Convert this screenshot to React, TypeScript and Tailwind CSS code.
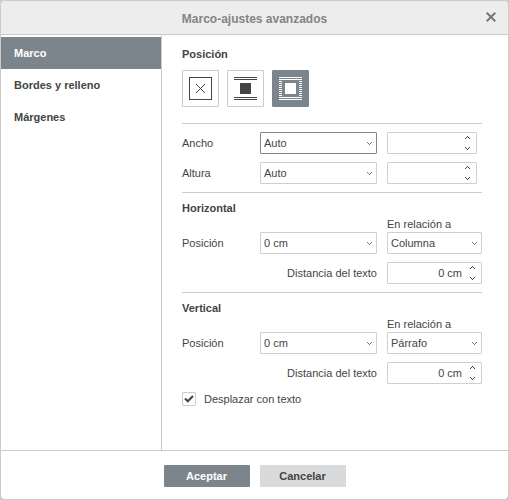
import { useState } from "react";
import type { ReactNode } from "react";

function Chevron({ up = false, className = "" }: { up?: boolean; className?: string }) {
  return (
    <svg
      width="5"
      height="3"
      viewBox="0 0 5 3"
      fill="currentColor"
      shapeRendering="crispEdges"
      aria-hidden="true"
      className={className}
    >
      {up ? (
        <path d="M2 0h1v1h1v1h1v1H4V2H3V1H2v1H1v1H0V2h1V1h1z" />
      ) : (
        <path d="M0 0h1v1h1v1h1V1h1V0h1v1H4v1H3v1H2V2H1V1H0z" />
      )}
    </svg>
  );
}

function Combo({
  id,
  label,
  options,
  active = false,
}: {
  id: string;
  label?: string;
  options: string[];
  active?: boolean;
}) {
  return (
    <div className="relative">
      <select
        id={id}
        aria-label={label}
        className={`block h-[22px] w-full appearance-none rounded-[1px] border bg-white pr-4 pl-[3px] text-[11px] leading-4 outline-none ${
          active ? "border-[#848484]" : "border-[#cfcfcf]"
        }`}
      >
        {options.map((o) => (
          <option key={o}>{o}</option>
        ))}
      </select>
      <Chevron className="pointer-events-none absolute top-[10px] right-[5px] text-[#777]" />
    </div>
  );
}

function Spinner({ id, label, initial = "" }: { id: string; label?: string; initial?: string }) {
  const [value, setValue] = useState(initial);
  const step = (by: number) =>
    setValue((v) => `${Math.max(0, Math.round(((parseFloat(v) || 0) + by) * 10) / 10)} cm`);
  return (
    <div className="flex h-[22px] rounded-[1px] border border-[#cfcfcf] bg-white">
      <input
        id={id}
        aria-label={label}
        type="text"
        value={value}
        onChange={(e) => setValue(e.target.value)}
        className="w-full min-w-0 flex-1 bg-transparent pr-px text-right text-[11px] leading-4 outline-none"
      />
      <div className="flex w-[18px] flex-col">
        <button
          type="button"
          aria-label="Aumentar"
          onClick={() => step(0.1)}
          className="flex flex-1 items-start justify-center pt-[3px]"
        >
          <Chevron up />
        </button>
        <button
          type="button"
          aria-label="Disminuir"
          onClick={() => step(-0.1)}
          className="flex flex-1 items-end justify-center pb-[3px]"
        >
          <Chevron />
        </button>
      </div>
    </div>
  );
}

function InlineIcon() {
  return (
    <svg width="23" height="23" viewBox="0 0 23 23" fill="none" stroke="currentColor" aria-hidden="true">
      <rect x="0.5" y="0.5" width="22" height="22" />
      <path d="M7 7l9 9M16 7l-9 9" shapeRendering="crispEdges" />
    </svg>
  );
}

function TopBottomIcon() {
  return (
    <svg width="23" height="23" viewBox="0 0 23 23" fill="currentColor" shapeRendering="crispEdges" aria-hidden="true">
      <path d="M0 0h23v1H0zM0 2h23v1H0zM0 20h23v1H0zM0 22h23v1H0zM6 6h11v11H6z" />
    </svg>
  );
}

function AroundIcon() {
  return (
    <svg width="23" height="23" viewBox="0 0 23 23" fill="currentColor" shapeRendering="crispEdges" aria-hidden="true">
      <path d="M0 0h23v1H0zM0 2h23v1H0zM0 20h23v1H0zM0 22h23v1H0zM6 6h11v11H6z" />
      {[4, 6, 8, 10, 12, 14, 16, 18].map((y) => (
        <path key={y} d={`M0 ${y}h3v1H0zM20 ${y}h3v1h-3z`} />
      ))}
    </svg>
  );
}

const wraps: { name: string; icon: ReactNode }[] = [
  { name: "En línea", icon: <InlineIcon /> },
  { name: "Superior e inferior", icon: <TopBottomIcon /> },
  { name: "Alrededor", icon: <AroundIcon /> },
];

const tabs = ["Marco", "Bordes y relleno", "Márgenes"];

function PlacementSection({
  id,
  title,
  relative,
  children,
}: {
  id: string;
  title: string;
  relative: string[];
  children?: ReactNode;
}) {
  return (
    <section className="border-t border-[#cbcbcb] pt-[7px] pb-2">
      <h2 className="font-bold">{title}</h2>
      <div className="grid grid-cols-[68px_1fr_95px] items-center gap-x-[10px]">
        <label htmlFor={`${id}-rel`} className="col-start-3">
          En relación a
        </label>
        <label htmlFor={`${id}-pos`}>Posición</label>
        <Combo id={`${id}-pos`} options={["0 cm"]} />
        <Combo id={`${id}-rel`} options={relative} />
      </div>
      <div className="mt-2 grid grid-cols-[1fr_95px] items-center gap-x-[10px]">
        <label htmlFor={`${id}-dist`} className="text-right">
          Distancia del texto
        </label>
        <Spinner id={`${id}-dist`} initial="0 cm" />
      </div>
      {children}
    </section>
  );
}

export default function App() {
  const [tab, setTab] = useState(0);
  const [wrap, setWrap] = useState(2);
  const [move, setMove] = useState(true);

  return (
    <div className="bg-[#cbcbcb] font-['Liberation_Sans',Arial,sans-serif] text-[11px] leading-4 text-[#444]">
      <div
        role="dialog"
        aria-labelledby="title"
        className="flex min-h-screen flex-col overflow-hidden rounded-[5px] border border-[#cbcbcb] bg-white"
      >
        <header className="relative flex h-[34px] items-center justify-center border-b border-[#cbcbcb] bg-[#ededed] pt-[2px]">
          <h1 id="title" className="text-[12px] font-bold text-[#848484]">
            Marco-ajustes avanzados
          </h1>
          <button type="button" aria-label="Cerrar" className="absolute top-[11px] right-3 text-[#777]">
            <svg width="10" height="10" viewBox="0 0 10 10" stroke="currentColor" strokeWidth="2" aria-hidden="true">
              <path d="M0.7 0.7l8.6 8.6M9.3 0.7l-8.6 8.6" />
            </svg>
          </button>
        </header>

        <div className="flex flex-1">
          <nav className="w-[161px] shrink-0 border-r border-[#cbcbcb] pt-[2px]">
            {tabs.map((t, i) => (
              <button
                key={t}
                type="button"
                onClick={() => setTab(i)}
                className={`block h-8 w-full pl-[13px] text-left font-bold ${
                  i === tab ? "bg-[#7d858c] text-white" : ""
                }`}
              >
                {t}
              </button>
            ))}
          </nav>

          <main className="min-w-0 flex-1 pt-[11px] pr-[26px] pl-5">
            <h2 className="font-bold">Posición</h2>
            <div className="mt-2 mb-4 flex gap-2">
              {wraps.map((w, i) => (
                <button
                  key={w.name}
                  type="button"
                  aria-label={w.name}
                  aria-pressed={i === wrap}
                  onClick={() => setWrap(i)}
                  className={`flex size-[37px] items-center justify-center rounded-[1px] border ${
                    i === wrap ? "border-[#7d858c] bg-[#7d858c] text-white" : "border-[#cbcbcb] bg-white"
                  }`}
                >
                  {w.icon}
                </button>
              ))}
            </div>

            <section className="flex flex-col gap-2 border-t border-[#cbcbcb] py-2">
              <div className="grid grid-cols-[68px_1fr_90px] items-center gap-x-[10px] pr-[5px]">
                <label htmlFor="width">Ancho</label>
                <Combo id="width" options={["Auto", "Exacto", "Al menos"]} active />
                <Spinner id="width-value" label="Valor del ancho" />
              </div>
              <div className="grid grid-cols-[68px_1fr_90px] items-center gap-x-[10px] pr-[5px]">
                <label htmlFor="height">Altura</label>
                <Combo id="height" options={["Auto", "Exacto", "Al menos"]} />
                <Spinner id="height-value" label="Valor de la altura" />
              </div>
            </section>

            <PlacementSection id="h" title="Horizontal" relative={["Columna", "Margen", "Página"]} />
            <PlacementSection id="v" title="Vertical" relative={["Párrafo", "Margen", "Página"]}>
              <label className="mt-[7px] flex items-center gap-2">
                <span className="relative flex">
                  <input
                    type="checkbox"
                    checked={move}
                    onChange={(e) => setMove(e.target.checked)}
                    className="size-[14px] appearance-none rounded-[1px] border border-[#cbcbcb] bg-white"
                  />
                  {move && (
                    <svg
                      width="10"
                      height="8"
                      viewBox="0 0 10 8"
                      fill="none"
                      stroke="currentColor"
                      strokeWidth="2"
                      aria-hidden="true"
                      className="pointer-events-none absolute top-[3px] left-[2px]"
                    >
                      <path d="M1 3.5l2.8 2.8L9 1" />
                    </svg>
                  )}
                </span>
                Desplazar con texto
              </label>
            </PlacementSection>
          </main>
        </div>

        <footer className="flex justify-center gap-[10px] border-t border-[#cbcbcb] pt-[14px] pb-3">
          <button type="button" className="h-[22px] w-[86px] rounded-[1px] bg-[#7d858c] font-bold text-white">
            Aceptar
          </button>
          <button type="button" className="h-[22px] w-[86px] rounded-[1px] bg-[#d8dadc] font-bold">
            Cancelar
          </button>
        </footer>
      </div>
    </div>
  );
}
